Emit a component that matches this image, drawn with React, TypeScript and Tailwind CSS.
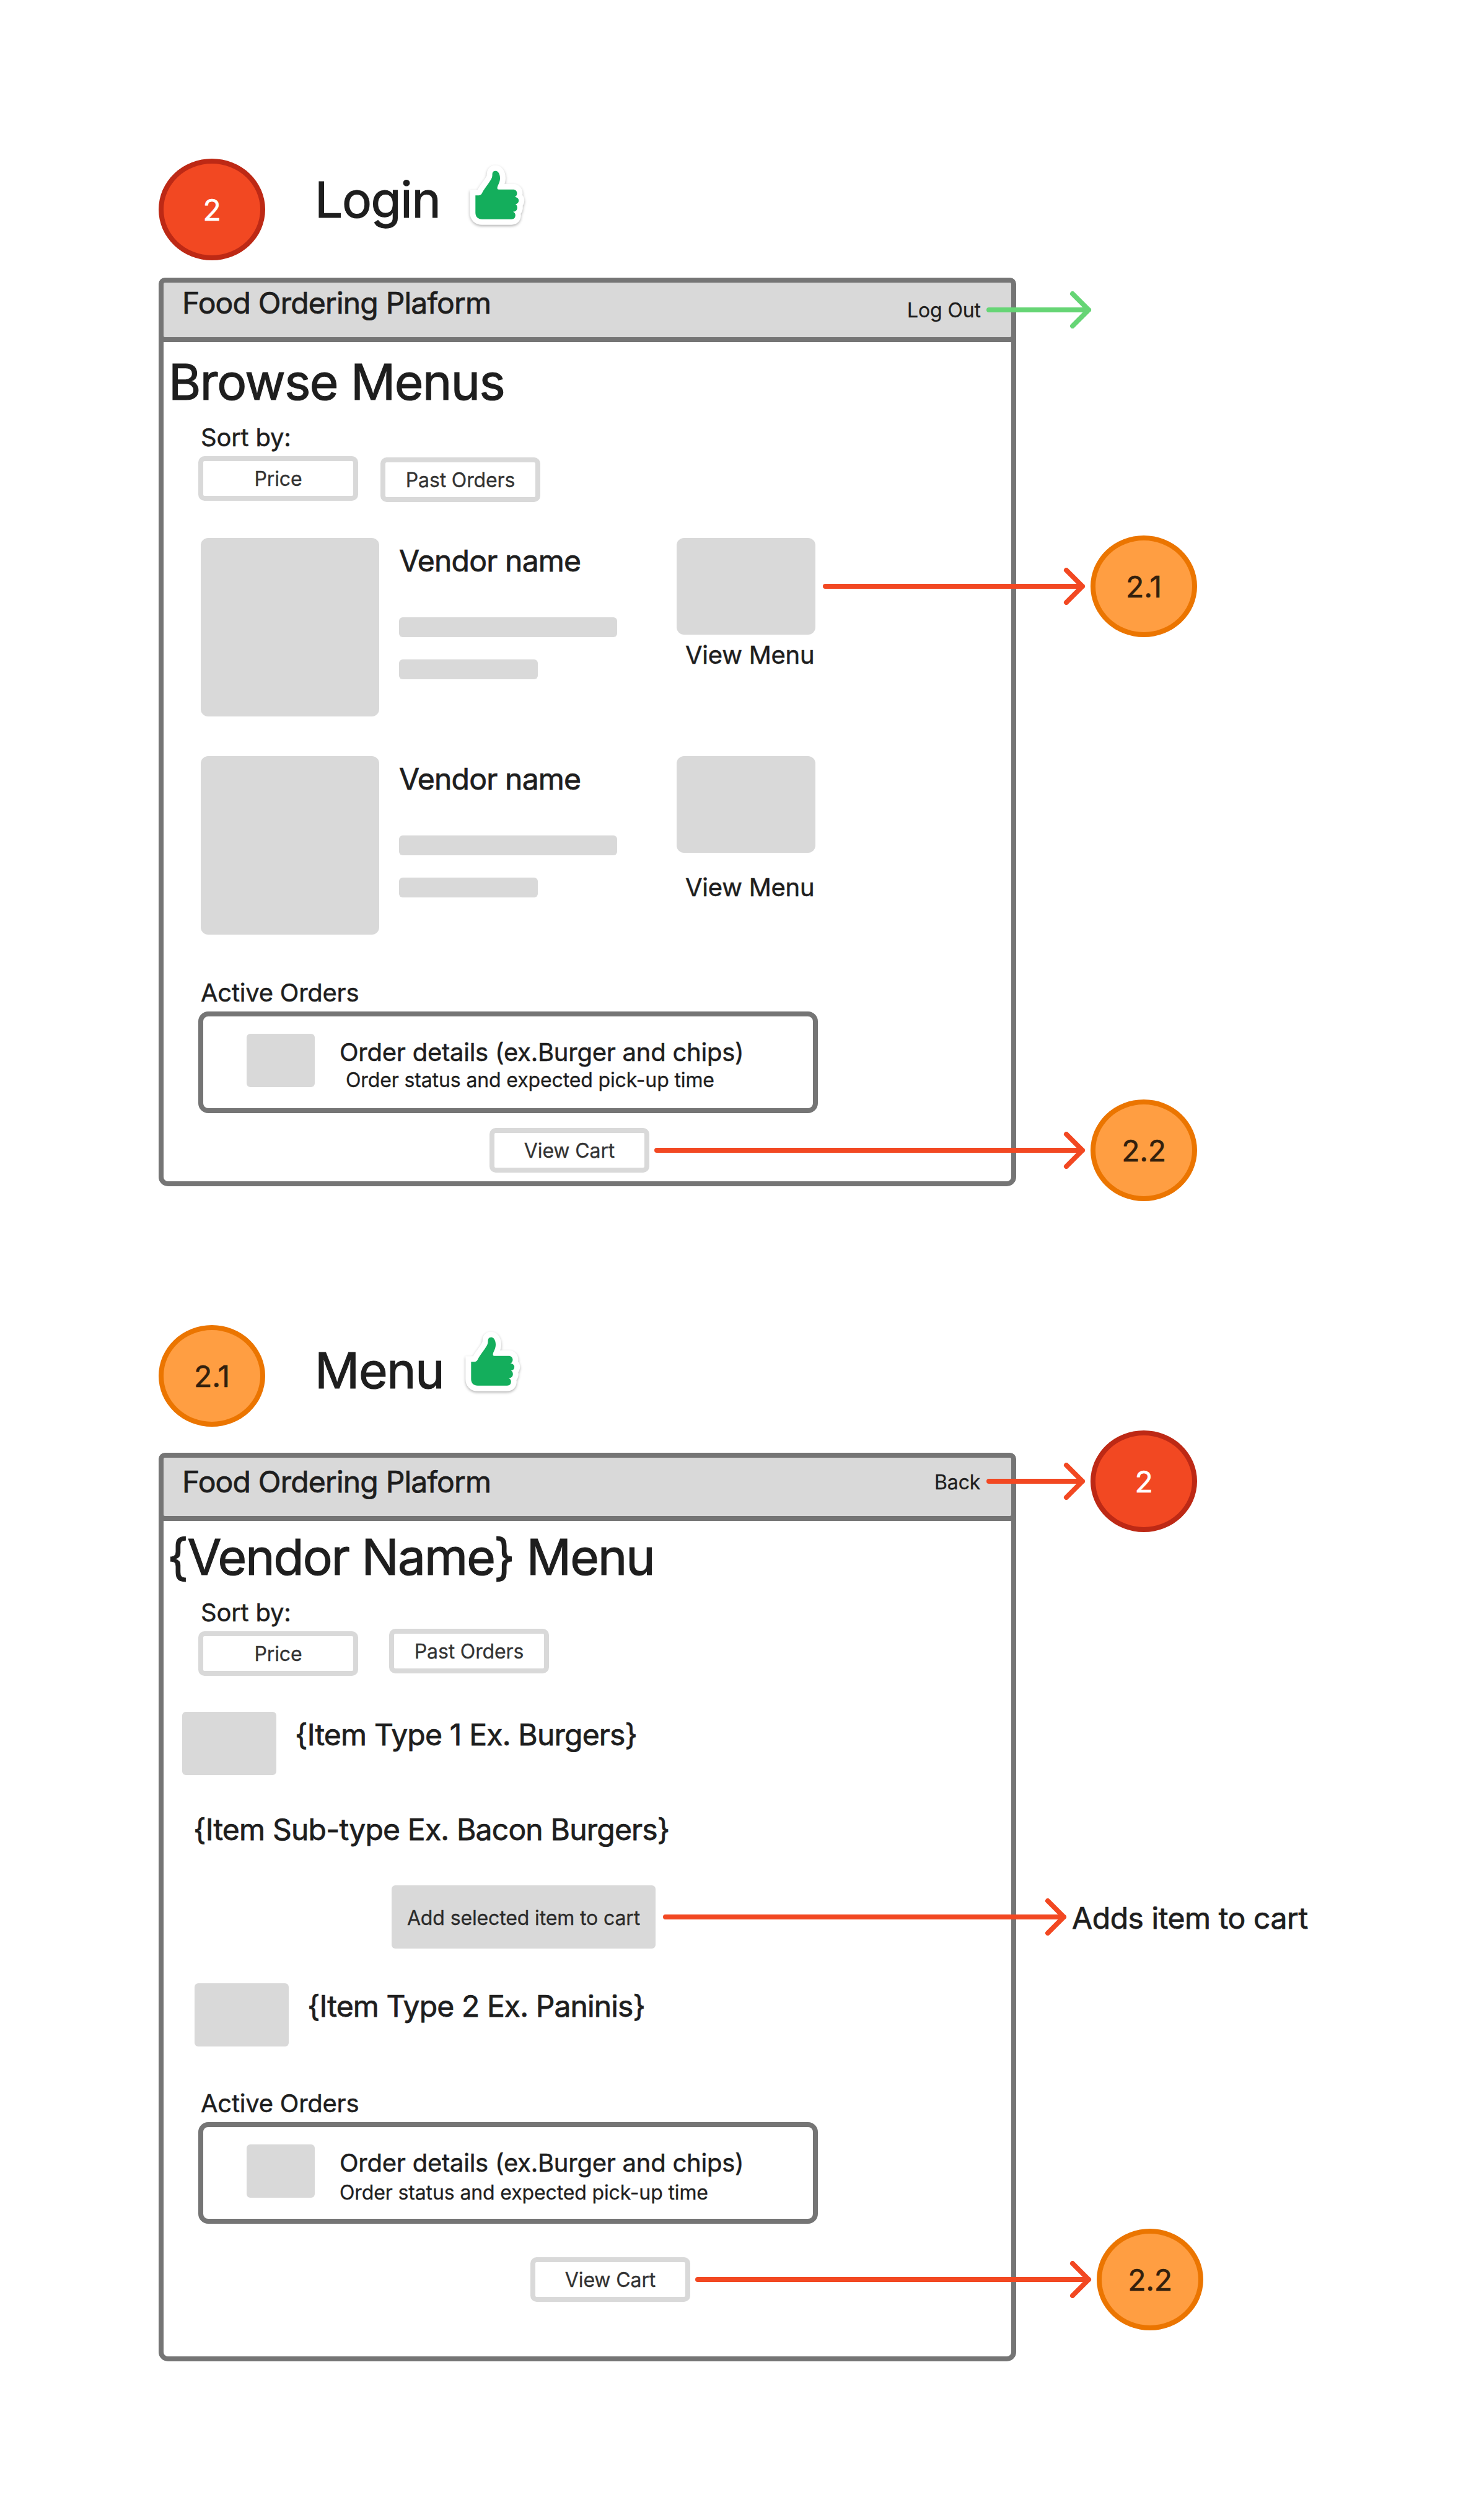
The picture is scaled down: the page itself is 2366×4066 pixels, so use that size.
import React, { ReactNode } from "react";

const T80 = "text-[80px] leading-[97px] font-normal [-webkit-text-stroke:1.2px_currentColor]";
const T48 = "text-[48px] leading-[59px] tracking-[-0.0168em] [-webkit-text-stroke:0.75px_currentColor]";
const T40 = "text-[40px] leading-[49px] tracking-[-0.0061em] [-webkit-text-stroke:0.5px_currentColor]";
const T32 = "text-[32px] leading-[39px] tracking-[-0.0040em] [-webkit-text-stroke:0.3px_currentColor]";

function Node({ label, place, tone }: { label: string; place: string; tone: "red" | "orange" }) {
  const colors =
    tone === "red"
      ? "bg-[#f24822] border-[#bd2915] text-white"
      : "bg-[#ff9e42] border-[#eb7500] text-[#33200d]";
  return (
    <div className={`absolute flex h-[164px] w-[172px] items-center justify-center rounded-[50%] border-8 text-[48px] leading-[59px] tracking-[-0.0050em] [-webkit-text-stroke:0.6px_currentColor] ${colors} ${place}`}>
      {label}
    </div>
  );
}

function Arrow({ length, place }: { length: number; place: string }) {
  const tip = length - 4;
  return (
    <svg
      className={`absolute ${place}`}
      width={length + 2}
      height={60}
      viewBox={`0 0 ${length + 2} 60`}
      fill="none"
      stroke="currentColor"
      strokeWidth={8}
      strokeLinecap="round"
      strokeLinejoin="round"
    >
      <path d={`M4 30H${tip}M${tip - 26} 4L${tip} 30L${tip - 26} 56`} />
    </svg>
  );
}

function ThumbSticker({ place }: { place: string }) {
  const d =
    "M7.3 47.3H12.5C15.2 47.3 16.8 46 18 43.5C20.5 38 25 33 29 27C32 22.500 34.300 19.500 34.500 15.500C34.600 13 34.400 11.500 35.300 10C36.800 7.200 41.500 7 43.800 9.500C46.200 12.200 47 16 47 19.500C47 25.500 44.500 29 43 33C42 36 42.500 37.700 45 37.700H67.800C72 37.700 74.500 40.300 74.500 44C74.500 46.800 73 48.900 70.600 49.800C74.800 50.300 77.200 52.500 77.200 55.600C77.200 58.800 75.200 60.800 71.800 61.500C74 62.700 75 65 74.800 67.700C74.500 71.500 71.800 73.500 68 73.700C70.600 74.600 71.900 76.800 71.800 79.500C71.600 83.300 69.500 85.700 65.500 85.700H18C11.500 85.700 7.300 81.800 7.300 75.300Z";
  return (
    <svg
      className={`absolute overflow-visible drop-shadow-[0_2px_2px_rgba(0,0,0,0.3)] ${place}`}
      width={90}
      height={96}
      viewBox="0 0 90 96"
    >
      <path d={d} fill="#fff" stroke="#fff" strokeWidth={18} />
      <path d={d} fill="#14ae5c" />
    </svg>
  );
}

function Button({ children, className = "" }: { children: ReactNode; className?: string }) {
  return (
    <div className={`flex h-[72px] w-[258px] shrink-0 items-center justify-center rounded-[10px] border-8 border-[#d9d9d9] text-[#333] ${T32} ${className}`}>
      {children}
    </div>
  );
}

function Frame({
  place,
  headerHeight,
  titleOffset,
  action,
  children,
}: {
  place: string;
  headerHeight: string;
  titleOffset: string;
  action: ReactNode;
  children: ReactNode;
}) {
  return (
    <section className={`absolute flex h-[1466px] w-[1384px] flex-col rounded-t-[10px] rounded-b-[15px] border-8 border-[#757575] ${place}`}>
      <header className="border-b-8 border-[#757575] bg-[#757575]">
        <div className={`flex justify-between rounded-[2px] bg-[#d9d9d9] pl-[30px] ${headerHeight}`}>
          <div className={`${T48} ${titleOffset}`}>Food Ordering Plaform</div>
          {action}
        </div>
      </header>
      {children}
    </section>
  );
}

function VendorRow({ className, labelGap }: { className: string; labelGap: string }) {
  return (
    <div className={`flex h-[288px] pl-[60px] ${className}`}>
      <div className="size-[288px] rounded-xl bg-[#d9d9d9]" />
      <div className="ml-8 w-[352px] pt-[7px]">
        <div className={T48}>Vendor name</div>
        <div className="mt-[62px] h-8 rounded-md bg-[#d9d9d9]" />
        <div className="mt-9 h-8 w-56 rounded-md bg-[#d9d9d9]" />
      </div>
      <div className="ml-24 w-56">
        <div className="h-[156px] rounded-xl bg-[#d9d9d9]" />
        <div className={`pl-3.5 ${T40} ${labelGap}`}>View Menu</div>
      </div>
    </div>
  );
}

function ActiveOrders({ className, status }: { className: string; status: string }) {
  return (
    <div className={className}>
      <div className={`ml-[60px] ${T40}`}>Active Orders</div>
      <div className="mt-1.5 ml-14 flex h-[164px] w-[1000px] rounded-2xl border-8 border-[#757575] pt-7 pl-[70px]">
        <div className="h-[86px] w-[110px] rounded-md bg-[#d9d9d9]" />
        <div className="ml-10 pt-[5px]">
          <div className={T40}>Order details (ex.Burger and chips)</div>
          <div className={`${T32} ${status}`}>Order status and expected pick-up time</div>
        </div>
      </div>
    </div>
  );
}

function MenuItem({ className, label, labelStyle }: { className: string; label: string; labelStyle: string }) {
  return (
    <div className={`flex h-[102px] ${className}`}>
      <div className="h-[102px] w-[152px] rounded-md bg-[#d9d9d9]" />
      <div className={`pt-[7px] text-[48px] leading-[59px] [-webkit-text-stroke:0.75px_currentColor] ml-[30px] ${labelStyle}`}>{label}</div>
    </div>
  );
}

export default function App() {
  return (
    <main className="relative h-[4066px] w-[2366px] overflow-hidden bg-white font-['Inter',sans-serif] whitespace-nowrap text-[#1e1e1e]">
      <Node label="2" tone="red" place="left-[256px] top-[256px]" />
      <h1 className={`absolute left-[508px] top-[273px] tracking-[-0.0164em] ${T80}`}>Login</h1>
      <ThumbSticker place="left-[760px] top-[268px]" />

      <Frame
        place="left-[256px] top-[448px]"
        headerHeight="h-[88px]"
        titleOffset="pt-[3px]"
        action={<div className={`w-[168px] pt-[25px] ${T32}`}>Log Out</div>}
      >
        <h2 className={`mt-[15px] ml-2 tracking-[-0.0187em] ${T80}`}>Browse Menus</h2>
        <div className={`mt-[17px] ml-[60px] ${T40}`}>Sort by:</div>
        <div className="mt-1.5 ml-14 flex gap-9">
          <Button>Price</Button>
          <Button className="mt-0.5">Past Orders</Button>
        </div>
        <VendorRow className="mt-[58px]" labelGap="mt-2" />
        <VendorRow className="mt-16" labelGap="mt-[31px]" />
        <ActiveOrders className="mt-[69px]" status="mt-px ml-2.5" />
        <Button className="mt-6 ml-[526px]">View Cart</Button>
      </Frame>

      <Arrow length={169} place="left-[1592px] top-[470px] text-[#66d575]" />
      <Arrow length={423} place="left-[1328px] top-[916px] text-[#f24822]" />
      <Node label="2.1" tone="orange" place="left-[1760px] top-[864px]" />
      <Arrow length={695} place="left-[1056px] top-[1826px] text-[#f24822]" />
      <Node label="2.2" tone="orange" place="left-[1760px] top-[1774px]" />

      <Node label="2.1" tone="orange" place="left-[256px] top-[2138px]" />
      <h1 className={`absolute left-[508px] top-[2162px] tracking-[-0.0164em] ${T80}`}>Menu</h1>
      <ThumbSticker place="left-[753px] top-[2150px]" />

      <Frame
        place="left-[256px] top-[2344px]"
        headerHeight="h-[94px]"
        titleOffset="pt-[9px]"
        action={<div className={`w-[124px] pt-5 ${T32}`}>Back</div>}
      >
        <h2 className={`mt-[9px] ml-1.5 tracking-[-0.0237em] ${T80}`}>{"{Vendor Name} Menu"}</h2>
        <div className={`mt-[17px] ml-[60px] ${T40}`}>Sort by:</div>
        <div className="mt-0.5 ml-14 flex gap-[50px]">
          <Button className="mt-1">Price</Button>
          <Button>Past Orders</Button>
        </div>
        <MenuItem className="mt-[58px] ml-[30px]" label="{Item Type 1 Ex. Burgers}" labelStyle="tracking-[-0.0168em]" />
        <div className={`mt-[58px] ml-12 ${T48}`}>{"{Item Sub-type Ex. Bacon Burgers}"}</div>
        <div className={`mt-[61px] ml-[368px] flex h-[102px] w-[426px] items-center justify-center rounded-md bg-[#d9d9d9] pt-0.5 text-[#2b2b2b] ${T32}`}>
          Add selected item to cart
        </div>
        <MenuItem className="mt-14 ml-[50px]" label="{Item Type 2 Ex. Paninis}" labelStyle="tracking-[-0.0185em]" />
        <ActiveOrders className="mt-[67px]" status="mt-1" />
        <Button className="mt-[54px] ml-[592px]">View Cart</Button>
      </Frame>

      <Arrow length={159} place="left-[1592px] top-[2360px] text-[#f24822]" />
      <Node label="2" tone="red" place="left-[1760px] top-[2308px]" />
      <Arrow length={651} place="left-[1070px] top-[3063px] text-[#f24822]" />
      <div className="absolute left-[1730px] top-[3065px] text-[48px] leading-[59px] tracking-[-0.0090em] [-webkit-text-stroke:0.75px_currentColor]">
        Adds item to cart
      </div>
      <Arrow length={639} place="left-[1122px] top-[3648px] text-[#f24822]" />
      <Node label="2.2" tone="orange" place="left-[1770px] top-[3596px]" />
    </main>
  );
}
